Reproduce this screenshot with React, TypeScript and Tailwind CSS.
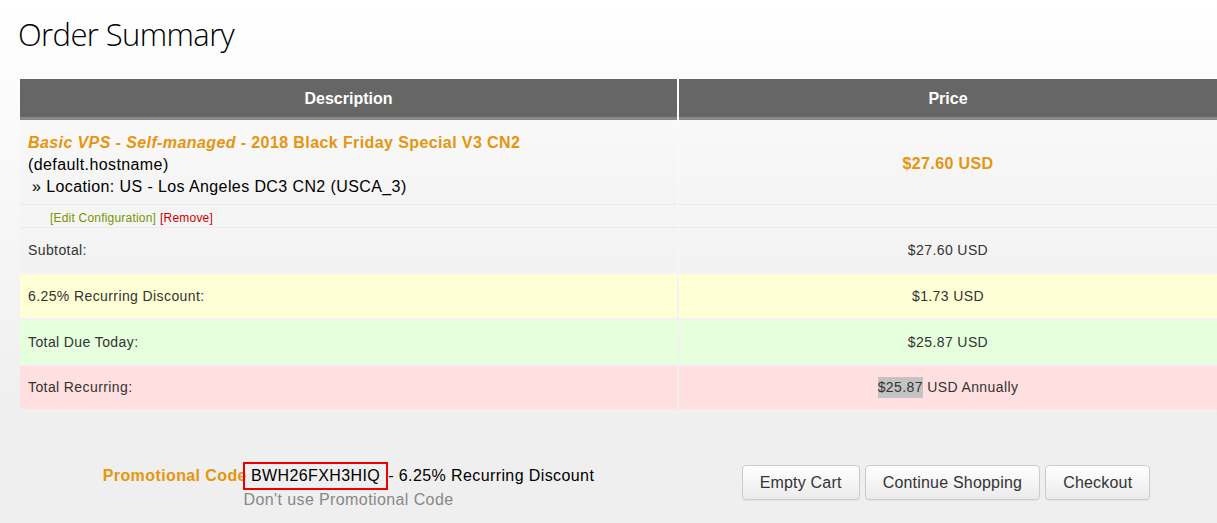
const rows = [
  { label: 'Subtotal:', value: '$27.60 USD', bg: 'bg-linear-to-b from-[#f5f5f5] to-[#f2f2f2]' },
  { label: '6.25% Recurring Discount:', value: '$1.73 USD', bg: 'bg-[#ffffd6]' },
  { label: 'Total Due Today:', value: '$25.87 USD', bg: 'bg-[#e6ffdc]' },
]

function Button({ label }: { label: string }) {
  return (
    <button
      type="button"
      className="h-[35px] rounded-[4px] border border-[#cccccc] bg-linear-to-b from-white to-[#ebebeb] px-[17px] text-[16px] tracking-[0.2px] text-[#333333] shadow-[0_1px_1px_rgba(0,0,0,0.05)]"
    >
      {label}
    </button>
  )
}

export default function App() {
  return (
    <div
      className="min-h-[523px] bg-linear-to-b from-white to-[#efefef] to-[80%] pl-[20px] pt-[14px] tracking-[0.4px] text-[#333333]"
      style={{ fontFamily: '"Liberation Sans", Arial, sans-serif' }}
    >
      <h1
        className="-ml-[2px] text-[31px] font-light leading-[40px] tracking-[-0.6px] text-black"
        style={{ fontFamily: '"Open Sans", sans-serif' }}
      >
        Order Summary
      </h1>

      <div className="mt-[25px] grid grid-cols-[657px_1fr] gap-x-[2px]">
        <div className="flex h-[41px] items-center justify-center border-b-[3px] border-[#888888] bg-[#666666] pt-[2px] text-[16px] font-bold tracking-normal text-white">
          Description
        </div>
        <div className="flex h-[41px] items-center justify-center border-b-[3px] border-[#888888] bg-[#666666] pt-[2px] text-[16px] font-bold tracking-normal text-white">
          Price
        </div>

        <div className="h-[85px] border-b border-[#ebebeb] bg-linear-to-b from-[#f9f9f9] to-[#f4f4f4] px-[8px] pt-[12px] text-[16px] leading-[22px] text-black">
          <div className="font-bold text-[#e5950e]">
            <em>Basic VPS - Self-managed</em> - 2018 Black Friday Special V3 CN2
          </div>
          <div>(default.hostname)</div>
          <div className="pl-[4px]">» Location: US - Los Angeles DC3 CN2 (USCA_3)</div>
        </div>
        <div className="flex h-[85px] items-center justify-center border-b border-[#ebebeb] bg-linear-to-b from-[#f9f9f9] to-[#f4f4f4] pt-[3px] text-[16px] font-bold text-[#e5950e]">
          $27.60 USD
        </div>

        <div className="flex h-[23px] items-center border-b border-[#ebebeb] bg-[#f5f5f5] pl-[30px] pt-[3px] text-[12px] tracking-[0.2px]">
          <span className="text-[#779500]">[Edit Configuration]</span>
          <span className="ml-[4px] text-[#cc0000]">[Remove]</span>
        </div>
        <div className="h-[23px] border-b border-[#ebebeb] bg-[#f5f5f5]" />

        {rows.map((row) => (
          <div key={row.label} className="contents">
            <div className={`mb-[2px] flex h-[44px] items-center pl-[8px] text-[14px] ${row.bg}`}>
              {row.label}
            </div>
            <div className={`mb-[2px] flex h-[44px] items-center justify-center text-[14px] ${row.bg}`}>
              {row.value}
            </div>
          </div>
        ))}

        <div className="flex h-[43px] items-center bg-[#ffdfe0] pl-[8px] text-[14px]">Total Recurring:</div>
        <div className="flex h-[43px] items-center justify-center bg-[#ffdfe0] text-[14px]">
          <span className="bg-[#c3c3c3]">$25.87</span>&nbsp;USD Annually
        </div>

        <div className="mt-[53px] flex flex-col items-center text-[16px] leading-[22px]">
          <div className="flex items-center text-black">
            <span className="font-bold text-[#e5950e]">Promotional Code</span>
            <span className="-ml-[4px] border-2 border-[#ee0000] px-[6px] leading-[24px]">BWH26FXH3HIQ</span>
            <span>- 6.25% Recurring Discount</span>
          </div>
          <div className="leading-[19px] text-[#888888]">Don't use Promotional Code</div>
        </div>
        <div className="mt-[56px] flex justify-center gap-[5px] pr-[4px]">
          <Button label="Empty Cart" />
          <Button label="Continue Shopping" />
          <Button label="Checkout" />
        </div>
      </div>
    </div>
  )
}
